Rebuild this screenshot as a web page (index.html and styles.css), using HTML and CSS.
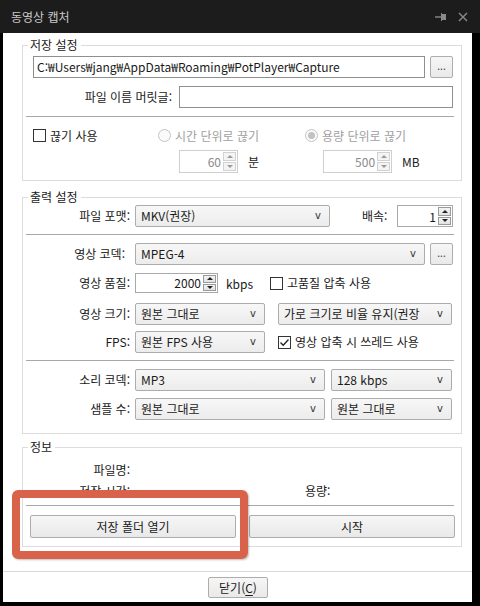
FILE: index.html
```html
<!DOCTYPE html>
<html lang="ko">
<head>
<meta charset="utf-8">
<link rel="stylesheet" href="styles.css">
</head>
<body>
<div class="window">
  <div class="titlebar">
    <span class="title">동영상 캡처</span>
    <div class="tb-icons">
      <svg class="pin" width="12" height="8" viewBox="0 0 12 8"><path d="M0 4h6" stroke="#8a8a8a" stroke-width="1.4"/><rect x="6" y="1" width="5" height="6" fill="#8a8a8a"/><path d="M6.5 0v8" stroke="#8a8a8a" stroke-width="1"/></svg>
      <svg class="close" width="10" height="10" viewBox="0 0 10 10"><path d="M1 1L9 9M9 1L1 9" stroke="#8a8a8a" stroke-width="1.4"/></svg>
    </div>
  </div>
  <div class="dialog">
    <div class="group g1">
      <div class="legend">저장 설정</div>
      <div class="row r-path">
        <div class="tbox path">C:₩Users₩jang₩AppData₩Roaming₩PotPlayer₩Capture</div>
        <div class="btn dots">...</div>
      </div>
      <div class="row r-prefix">
        <div class="lbl prefix-lbl">파일 이름 머릿글:</div>
        <div class="tbox prefix"></div>
      </div>
      <div class="sep"></div>
      <div class="row r-split">
        <div class="opt c1"><span class="chk"></span><span>끊기 사용</span></div>
        <div class="opt c2 disabled"><span class="radio"></span><span>시간 단위로 끊기</span></div>
        <div class="opt c3 disabled"><span class="radio on"></span><span>용량 단위로 끊기</span></div>
      </div>
      <div class="row r-spins">
        <div class="spin disabled s60"><span class="val">60</span><span class="arrows"><span class="up"></span><span class="dn"></span></span></div>
        <span class="unit u-min">분</span>
        <div class="spin disabled s500"><span class="val">500</span><span class="arrows"><span class="up"></span><span class="dn"></span></span></div>
        <span class="unit u-mb">MB</span>
      </div>
    </div>

    <div class="group g2">
      <div class="legend">출력 설정</div>
      <div class="frow fa">
        <div class="lbl">파일 포맷:</div>
        <div class="dd w-fmt"><span>MKV(권장)</span><span class="v">v</span></div>
        <div class="lbl speed-lbl">배속:</div>
        <div class="spin s1"><span class="val">1</span><span class="arrows"><span class="up"></span><span class="dn"></span></span></div>
      </div>
      <div class="sep"></div>
      <div class="frow fb">
        <div class="lbl">영상 코덱:</div>
        <div class="dd w-codec"><span>MPEG-4</span><span class="v">v</span></div>
        <div class="btn dots">...</div>
      </div>
      <div class="frow fc">
        <div class="lbl">영상 품질:</div>
        <div class="spin s2000"><span class="val">2000</span><span class="arrows"><span class="up"></span><span class="dn"></span></span></div>
        <span class="unit u-kbps">kbps</span>
        <div class="opt hq"><span class="chk"></span><span>고품질 압축 사용</span></div>
      </div>
      <div class="frow fd">
        <div class="lbl">영상 크기:</div>
        <div class="dd w-half"><span>원본 그대로</span><span class="v">v</span></div>
        <div class="dd w-ratio"><span>가로 크기로 비율 유지(권장</span><span class="v">v</span></div>
      </div>
      <div class="frow fe">
        <div class="lbl">FPS:</div>
        <div class="dd w-half"><span>원본 FPS 사용</span><span class="v">v</span></div>
        <div class="opt thr"><span class="chk checked"><svg width="11" height="11" viewBox="0 0 11 11"><path d="M1.5 5.5L4.2 8.3L9.5 2.5" fill="none" stroke="#222" stroke-width="1.3"/></svg></span><span>영상 압축 시 쓰레드 사용</span></div>
      </div>
      <div class="sep"></div>
      <div class="frow ff">
        <div class="lbl">소리 코덱:</div>
        <div class="dd w-audio"><span>MP3</span><span class="v">v</span></div>
        <div class="dd w-rate"><span>128 kbps</span><span class="v">v</span></div>
      </div>
      <div class="frow fg">
        <div class="lbl">샘플 수:</div>
        <div class="dd w-audio"><span>원본 그대로</span><span class="v">v</span></div>
        <div class="dd w-rate"><span>원본 그대로</span><span class="v">v</span></div>
      </div>
    </div>

    <div class="group g3">
      <div class="legend">정보</div>
      <div class="irow i1"><div class="lbl">파일명:</div></div>
      <div class="irow i2"><div class="lbl">저장 시간:</div><div class="lbl size-lbl">용량:</div></div>
      <div class="sep"></div>
      <div class="brow">
        <div class="btn big">저장 폴더 열기</div>
        <div class="btn big">시작</div>
      </div>
    </div>

    <div class="footer">
      <div class="btn close-btn">닫기(<u>C</u>)</div>
    </div>

    <div class="highlight"></div>
  </div>
</div>
</body>
</html>
```

FILE: styles.css
```css
* { box-sizing: border-box; }
html, body { margin: 0; padding: 0; }
body {
  width: 480px;
  height: 606px;
  background: #000;
  font-family: "Noto Sans CJK KR", "Noto Sans", sans-serif;
  font-size: 12px;
  color: #1a1a1a;
  overflow: hidden;
}
.window { width: 480px; height: 606px; }
.titlebar {
  height: 33px;
  background: #1c1c1c;
  display: flex;
  align-items: center;
  justify-content: space-between;
  padding: 0 12px 0 11px;
}
.title { color: #c9c9c9; font-size: 12px; line-height: 14px; }
.tb-icons { display: flex; align-items: center; gap: 11px; }
.pin { display: block; }
.close { display: block; }

.dialog {
  position: relative;
  margin-left: 3px;
  width: 469px;
  height: 569px;
  background: #fff;
  padding-top: 12px;
}
.group {
  margin-left: 19px;
  width: 440px;
  border: 1px solid #dcdcdc;
}
.legend {
  width: fit-content;
  margin: -8px 0 0 5px;
  padding: 0 3px 0 2px;
  height: 14px;
  line-height: 14px;
  background: #fff;
}
.sep {
  margin-left: 3px;
  width: 428px;
  height: 1px;
  background: #a8a8a8;
}
.row { display: flex; align-items: center; margin-left: 10px; }
.lbl { white-space: nowrap; line-height: 14px; }

.tbox {
  height: 22px;
  border: 1px solid #8f8f8f;
  background: #fff;
  line-height: 20px;
  padding-left: 3px;
  white-space: nowrap;
  overflow: hidden;
}
.btn {
  height: 22px;
  border: 1px solid #adadad;
  border-radius: 2px;
  background: linear-gradient(#f6f6f6, #e9e9e9);
  text-align: center;
  line-height: 20px;
  white-space: nowrap;
}
.dots { width: 23px; font-size: 10px; line-height: 18px; color: #444; }

.g1 { margin-top: 0; }
.r-path { margin-top: 4px; gap: 5px; }
.path { width: 392px; }
.r-prefix { margin-top: 8px; }
.prefix-lbl { width: 146px; text-align: right; padding-right: 7px; }
.prefix { width: 274px; }
.g1 .sep { margin-top: 8px; }
.r-split { margin-top: 11px; height: 15px; }
.opt { display: flex; align-items: center; gap: 4px; white-space: nowrap; line-height: 14px; }
.c1 { width: 125px; }
.c2 { width: 147px; }
.disabled { color: #a0a0a0; }
.chk {
  width: 13px; height: 13px;
  border: 1px solid #333;
  background: #fff;
  display: flex; align-items: center; justify-content: center;
  flex: none;
}
.radio {
  width: 13px; height: 13px;
  border: 1px solid #c4c4c4;
  border-radius: 50%;
  background: #fafafa;
  flex: none;
  display: flex; align-items: center; justify-content: center;
}
.radio.on::after {
  content: "";
  width: 7px; height: 7px; border-radius: 50%;
  background: #c2c2c2;
}
.r-spins { margin-top: 6px; height: 24px; }
.spin {
  height: 23px;
  border: 1px solid #a9a9a9;
  background: #fff;
  display: flex;
  align-items: stretch;
  padding: 1px;
}
.spin .val { flex: 1; text-align: right; line-height: 19px; padding-right: 2px; }
.spin .arrows { width: 13px; display: flex; flex-direction: column; gap: 1px; }
.spin .up, .spin .dn {
  flex: 1;
  border: 1px solid #9a9a9a;
  background: linear-gradient(#f4f4f4, #e2e2e2);
  display: flex; align-items: center; justify-content: center;
}
.spin .up::after { content: ""; border: 3px solid transparent; border-bottom: 3px solid #222; border-top: 0; }
.spin .dn::after { content: ""; border: 3px solid transparent; border-top: 3px solid #222; border-bottom: 0; }
.spin.disabled { border-color: #cfcfcf; color: #8a8a8a; }
.spin.disabled .up, .spin.disabled .dn { border-color: #d2d2d2; background: #f4f4f4; }
.spin.disabled .up::after { border-bottom-color: #9a9a9a; }
.spin.disabled .dn::after { border-top-color: #9a9a9a; }
.s60 { width: 59px; margin-left: 146px; }
.u-min { margin-left: 10px; color: #1a1a1a; }
.s500 { width: 69px; margin-left: 64px; }
.u-mb { margin-left: 10px; }
.g1 { padding-bottom: 7px; }

.g2 { margin-top: 16px; padding-bottom: 13px; }
.frow { display: flex; align-items: center; height: 22px; }
.frow > .lbl:first-child { width: 112px; text-align: right; padding-right: 5px; }
.dd {
  height: 22px;
  border: 1px solid #acacac;
  border-radius: 2px;
  background: linear-gradient(#f7f7f7, #ececec);
  display: flex;
  align-items: center;
  justify-content: space-between;
  padding: 0 8px 0 5px;
  line-height: 14px;
  white-space: nowrap;
  overflow: hidden;
}
.dd .v { font-family: "DejaVu Sans", sans-serif; font-size: 10px; color: #333; flex: none; padding-left: 4px; }
.fa { margin-top: 1px; }
.w-fmt { width: 195px; }
.speed-lbl { margin-left: 32px; width: 28px; }
.s1 { width: 56px; margin-left: 7px; height: 22px; }
.g2 .sep { margin-top: 7px; }
.fb { margin-top: 8px; gap: 5px; }
.fb > .lbl:first-child { width: 107px; }
.w-codec { width: 290px; }
.fc { margin-top: 8px; height: 20px; }
.s2000 { width: 83px; height: 20px; }
.s2000 .val { line-height: 16px; }
.u-kbps { margin-left: 8px; width: 44px; }
.fd { margin-top: 10px; }
.fe { margin-top: 6px; }
.w-half { width: 130px; }
.w-ratio { width: 174px; margin-left: 13px; }
.thr { margin-left: 13px; }
.g2 .sep + .ff { margin-top: 8px; }
.fg { margin-top: 7px; }
.w-audio { width: 190px; }
.w-rate { width: 121px; margin-left: 6px; }

.g3 { margin-top: 13px; padding-bottom: 8px; }
.irow { display: flex; height: 14px; }
.irow > .lbl:first-child { width: 107px; text-align: right; }
.i1 { margin-top: 9px; }
.i2 { margin-top: 7px; }
.size-lbl { margin-left: 175px; }
.g3 .sep { margin-top: 7px; }
.brow { display: flex; gap: 13px; margin-top: 9px; margin-left: 7px; }
.big { width: 206px; height: 23px; line-height: 21px; }

.footer {
  margin-top: 24px;
  border-top: 1px solid #dadada;
  display: flex;
  justify-content: center;
  padding-top: 5px;
}
.close-btn { width: 60px; height: 21px; line-height: 19px; margin-left: 1px; }
.close-btn u { text-underline-offset: 2px; }

.highlight {
  position: absolute;
  left: 9px;
  top: 457px;
  width: 236px;
  height: 69px;
  border: 8px solid #d9634a;
  border-radius: 6px;
  box-shadow: 1px 1px 2px rgba(0,0,0,0.25);
}
```
